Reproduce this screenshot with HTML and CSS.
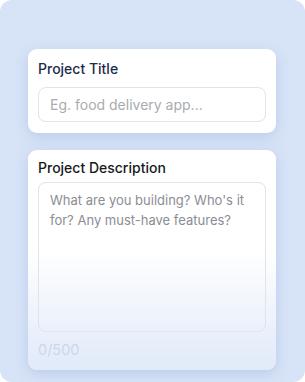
FILE: index.html
```html
<!DOCTYPE html>
<html lang="en">
<head>
<meta charset="utf-8">
<title>Project form</title>
<link rel="stylesheet" href="styles.css">
</head>
<body>
<div class="panel">
  <section class="card card-title">
    <label class="label label-navy" for="title">Project Title</label>
    <input id="title" class="input" type="text" placeholder="Eg. food delivery app...">
  </section>
  <section class="card card-desc">
    <label class="label label-dark" for="desc">Project Description</label>
    <textarea id="desc" class="textarea" placeholder="What are you building? Who's it for? Any must-have features?"></textarea>
    <div class="counter">0/500</div>
    <div class="fade"></div>
  </section>
</div>
</body>
</html>
```
FILE: styles.css
```css
* { box-sizing: border-box; }
html, body { margin: 0; padding: 0; background: #ffffff; }
body {
  width: 305px;
  height: 382px;
  overflow: hidden;
  font-family: Inter, "Noto Sans", sans-serif;
}
.panel {
  height: 382px;
  border-radius: 12px;
  background: #d7e3f7;
  padding: 49px 29px 0 28px;
  display: flex;
  flex-direction: column;
  gap: 17px;
}
.card {
  background: #ffffff;
  border-radius: 9px;
  box-shadow: 0 4px 14px rgba(120, 150, 200, 0.28);
  padding: 0 10px;
  display: flex;
  flex-direction: column;
}
.card-title { padding-top: 10px; padding-bottom: 11px; }
.card-desc { position: relative; padding-top: 8px; height: 220px; overflow: hidden; }
.label {
  font-size: 14px;
  line-height: 20px;
  font-weight: 500;
}
.label-navy { color: #1e2b4b; margin-bottom: 8px; }
.label-dark { color: #171a20; margin-bottom: 4px; }
.input, .textarea {
  font-family: inherit;
  border: 1px solid #e3e4e7;
  border-radius: 8px;
  background: #ffffff;
  outline: none;
  width: 100%;
  color: #333;
}
.input {
  font-size: 14px;
  height: 35px;
  padding: 0 11px;
  line-height: 20px;
}
.textarea {
  font-size: 13px;
  height: 150px;
  resize: none;
  padding: 7px 11px;
  line-height: 20px;
}
.input::placeholder { color: #a9abb0; }
.textarea::placeholder { color: #8a8d93; }
.counter {
  font-size: 14.5px;
  line-height: 20px;
  color: #b9c2d0;
  margin-top: 8px;
}
.fade {
  position: absolute;
  left: 0;
  right: 0;
  top: 100px;
  bottom: 0;
  background: linear-gradient(to bottom, rgba(215, 227, 247, 0) 0%, rgba(215, 227, 247, 0.35) 45%, rgba(215, 227, 247, 0.75) 100%);
  pointer-events: none;
}
```
